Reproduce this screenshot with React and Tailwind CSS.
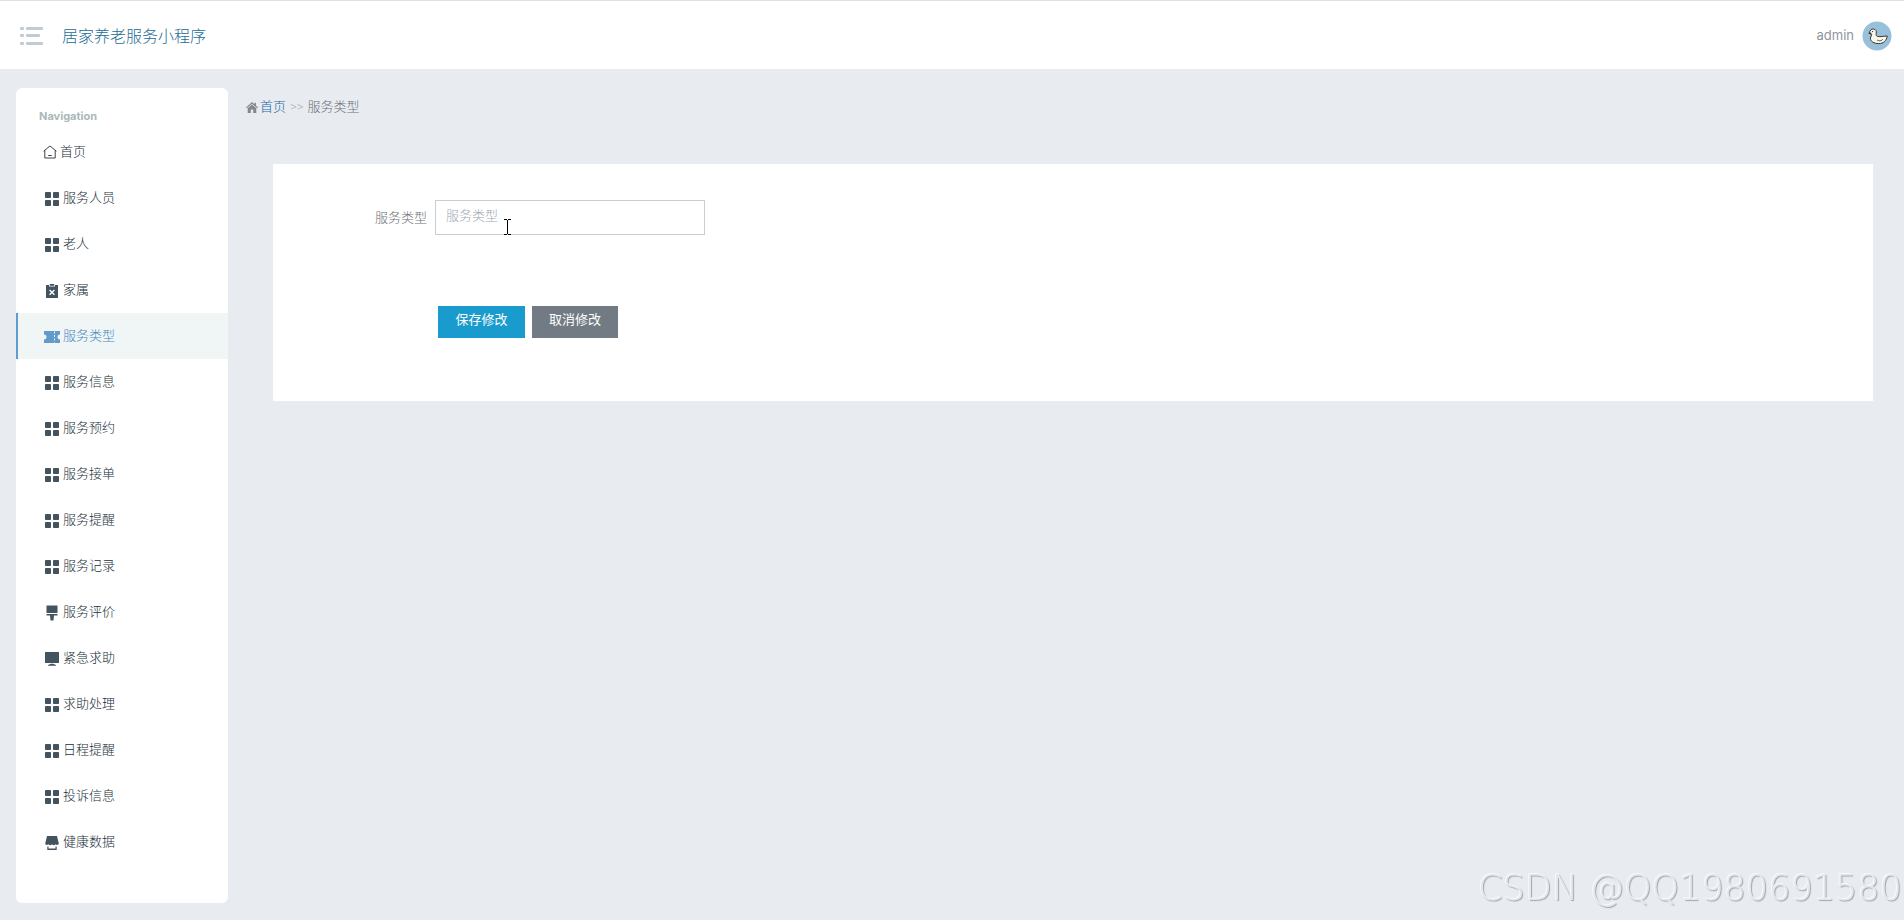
import React from "react";

const GridIcon = () => (
  <svg viewBox="0 0 14 14" className="size-3.5" fill="currentColor" aria-hidden="true">
    <rect x="0" y="0" width="6" height="6" rx="0.8" />
    <rect x="8" y="0" width="6" height="6" rx="0.8" />
    <rect x="0" y="8" width="6" height="6" rx="0.8" />
    <rect x="8" y="8" width="6" height="6" rx="0.8" />
  </svg>
);

const HouseIcon = () => (
  <svg viewBox="0 0 14 14" className="size-3.5" fill="none" stroke="currentColor" strokeWidth="0.9" aria-hidden="true">
    <path d="M0.600 6.200 7 1l6.400 5.200M1.800 5.300V13h10.400V5.300M5.200 10.500h3.600" />
  </svg>
);

const FailedIcon = () => (
  <svg viewBox="0 0 14 14" className="size-3.5" aria-hidden="true">
    <path fill="currentColor" d="M1 1h3v1.600h6V1h3v13H1z" />
    <path fill="currentColor" d="M4.800 0h4.400v1.800H4.800z" />
    <path stroke="#fff" strokeWidth="1.3" d="m4.600 6 4.800 4.800M9.400 6l-4.800 4.800" />
  </svg>
);

const TicketIcon = () => (
  <svg viewBox="0 0 16 12" className="h-3 w-4" aria-hidden="true">
    <path fill="currentColor" d="M0 0h16v3.500a2.500 2.500 0 0 0 0 5V12H0V8.500a2.500 2.500 0 0 0 0-5z" />
    <path stroke="#f0f5f6" strokeWidth="1" strokeDasharray="2 1.500" d="M10.500 0.500v11" />
  </svg>
);

const BrushIcon = () => (
  <svg viewBox="0 0 14 15" className="h-4 w-3.5" fill="currentColor" aria-hidden="true">
    <path d="M1.500 0h11v7.500h-11zM1.500 8.600h11v1.400h-3.500L8.500 15h-3L5 10H1.500z" />
  </svg>
);

const MonitorIcon = () => (
  <svg viewBox="0 0 14 14" className="size-3.5" fill="currentColor" aria-hidden="true">
    <path d="M0.500 0h13a.5.5 0 0 1 .5.5v10a.5.5 0 0 1-.5.5h-13a.5.5 0 0 1-.5-.5v-10A.5.5 0 0 1 .5 0zM6 11.800h2l3 1.200v.8H3V13z" />
  </svg>
);

const ShopIcon = () => (
  <svg viewBox="0 0 14 14" className="size-3.5" fill="currentColor" aria-hidden="true">
    <path d="M2 0h10l1.800 7.500c0 1.500-2.200 2-3.200.8-1 1.200-2.600 1.200-3.600 0-1 1.200-2.600 1.200-3.600 0-1 1.200-3.200.7-3.200-.8z" />
    <path d="M2.300 10.500h1.200v2h7v-2h1.200V14H2.300z" />
  </svg>
);

const items = [
  ["服务人员", GridIcon],
  ["老人", GridIcon],
  ["家属", FailedIcon],
  ["服务类型", TicketIcon],
  ["服务信息", GridIcon],
  ["服务预约", GridIcon],
  ["服务接单", GridIcon],
  ["服务提醒", GridIcon],
  ["服务记录", GridIcon],
  ["服务评价", BrushIcon],
  ["紧急求助", MonitorIcon],
  ["求助处理", GridIcon],
  ["日程提醒", GridIcon],
  ["投诉信息", GridIcon],
  ["健康数据", ShopIcon],
];

function Header() {
  return (
    <header className="flex h-[69px] items-center justify-between border-t border-[#dedfe2] bg-white pt-0.5 pr-3 pl-5">
      <div className="flex items-center gap-[18px]">
        <button type="button" aria-label="菜单" className="text-[#c3cbd2]">
          <svg viewBox="0 0 24 20" className="h-5 w-6" fill="currentColor" aria-hidden="true">
            <rect x="0" y="1" width="4" height="3" rx="1" />
            <rect x="6" y="1" width="17" height="3" rx="1" />
            <rect x="0" y="8" width="4" height="3" rx="1" />
            <rect x="6" y="8" width="14" height="3" rx="1" />
            <rect x="0" y="16" width="4" height="3" rx="1" />
            <rect x="6" y="16" width="17" height="3" rx="1" />
          </svg>
        </button>
        <a href="#" className="pt-0.5 text-base text-[#1c6c94]">居家养老服务小程序</a>
      </div>
      <button type="button" className="flex items-center gap-2 font-['Inter',sans-serif] text-[13px] font-normal text-[#8f959a]">
        <span>admin</span>
        <svg viewBox="0 0 30 30" className="size-[30px]" aria-hidden="true">
          <circle cx="15" cy="15" r="14.500" fill="#98c0da" />
          <path
            d="M7.400 12.200c.3-2.800 1.900-4.400 4-4.200 2.300.2 3.400 2.200 2.800 4.300-.4 1.600 0 2.900 1.600 3.200 2.800.5 5.800-.3 9.400-.5-.6 4.600-3.700 7.600-8.400 7.600-5 0-8.500-2.300-8.400-5.500.1-1.700 1.400-2.700 1.400-3.900z"
            fill="#fbf8ee"
            stroke="#3a342c"
            strokeWidth="1"
          />
          <path d="m6 12.400 3.200-1.200-.4 2.400z" fill="#3a342c" />
          <circle cx="10.600" cy="10.600" r="0.700" fill="#3a342c" />
          <path d="M15 19c1.800 1.300 4.200 1 5.800-.6" fill="none" stroke="#3a342c" strokeWidth="0.800" />
        </svg>
      </button>
    </header>
  );
}

function Sidebar() {
  return (
    <nav className="w-[212px] shrink-0 rounded-md bg-white pb-[38px]">
      <h2 className="flex h-[41px] items-end pb-px pl-[23px] font-['Inter',sans-serif] text-[11px] leading-6 font-bold text-[#a9b9b9]">
        Navigation
      </h2>
      <ul className="text-[13px] text-[#22303a]">
        <li>
          <a href="#" className="flex h-[46px] items-center gap-[3px] pl-[27px]">
            <HouseIcon />
            <span>首页</span>
          </a>
        </li>
        {items.map(([label, Icon]) => {
          const active = label === "服务类型";
          return (
            <li key={label}>
              <a
                href="#"
                aria-current={active ? "page" : undefined}
                className={
                  active
                    ? "flex h-[46px] items-center gap-[3px] border-l-2 border-[#619bcb] bg-[#f0f5f6] pl-[26px] text-[#4386bf]"
                    : "flex h-[46px] items-center gap-[3px] pl-7"
                }
              >
                <span className={active ? "flex w-4 justify-center pt-0.5 text-[#619bcb]" : "flex w-4 justify-center pt-0.5 text-[#44545f]"}>
                  <Icon />
                </span>
                <span>{label}</span>
              </a>
            </li>
          );
        })}
      </ul>
    </nav>
  );
}

export default function App() {
  return (
    <div className="min-h-screen bg-[#e8ebf0] font-['Roboto','Noto_Sans_CJK_SC',sans-serif] font-light">
      <Header />
      <div className="flex items-start px-4 pt-[19px] pb-4">
        <Sidebar />
        <main className="min-w-0 flex-1 pr-[15px] pl-[18px]">
          <div className="flex h-[38px] items-center text-[13px] text-[#6b7074]">
            <svg viewBox="0 0 12 11" className="mr-0.5 h-[11px] w-3 text-[#84898d]" fill="currentColor" aria-hidden="true">
              <path d="M6 0 8.500 2.200V.8H10v2.800L12 5.500l-.7.8L6 1.700.7 6.300 0 5.500z" />
              <path d="M6 2.600 10.300 6.300V11H7.200V7.600H4.800V11H1.700V6.300z" />
            </svg>
            <a href="#" className="text-[#1a65a3]">首页</a>
            <span className="mx-1 text-[#b3b8be]">&gt;&gt;</span>
            <span>服务类型</span>
          </div>
          <form className="mt-[38px] ml-[27px] bg-white pt-9 pb-[63px]" onSubmit={(e) => e.preventDefault()}>
            <div className="flex items-center gap-2 pl-[102px] text-[13px]">
              <label htmlFor="service-type" className="text-[#6b7074]">服务类型</label>
              <div className="relative">
                <input
                  id="service-type"
                  type="text"
                  placeholder="服务类型"
                  className="block h-[35px] w-[270px] border border-[#cbcdd0] bg-white px-2.5 pb-1 outline-none placeholder:text-[#9ba8b2]"
                />
                <svg viewBox="0 0 7 16" className="absolute top-[19px] left-[69px] h-4 w-[7px]" fill="none" stroke="#000" aria-hidden="true">
                  <path d="M0 .5h3M4 .5h3M3.500 1v14M0 15.500h3M4 15.500h3" />
                </svg>
              </div>
            </div>
            <div className="mt-[71px] flex gap-[7px] pl-[165px] text-[13px] font-normal text-white">
              <button type="submit" className="h-8 w-[87px] bg-[#199bcd] pb-1">保存修改</button>
              <button type="button" className="h-8 w-[86px] bg-[#727b84] pb-1">取消修改</button>
            </div>
          </form>
        </main>
      </div>
      <div className="pointer-events-none fixed right-0.5 bottom-3 font-['DejaVu_Sans',sans-serif] text-[35px] leading-10 font-extralight text-[#e4e6ea] [text-shadow:-1px_-1px_0_#f8f9fb,1px_1px_1px_#a2a5aa]">
        CSDN @QQ1980691580
      </div>
    </div>
  );
}
